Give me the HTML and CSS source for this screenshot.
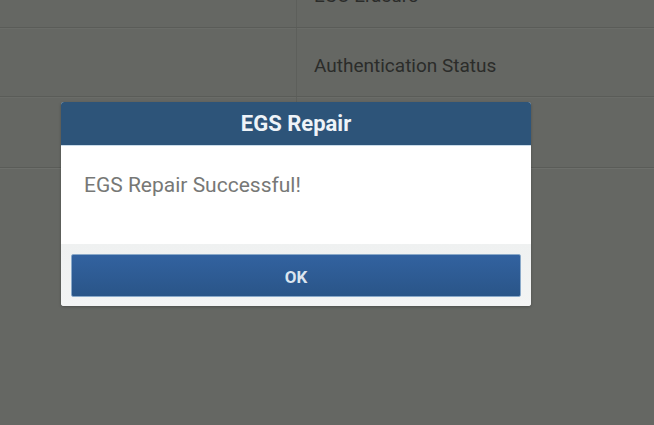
FILE: index.html
```html
<!DOCTYPE html>
<html>
<head>
<meta charset="utf-8">
<link rel="stylesheet" href="styles.css">
</head>
<body>
<div class="screen">
  <div class="table">
    <div class="row first">
      <div class="cell left"></div>
      <div class="cell right">ECU Erasure</div>
    </div>
    <div class="row">
      <div class="cell left"></div>
      <div class="cell right">Authentication Status</div>
    </div>
    <div class="row third">
      <div class="cell left"></div>
      <div class="cell right"></div>
    </div>
  </div>
  <div class="dialog">
    <div class="dialog-title">EGS Repair</div>
    <div class="dialog-body">EGS Repair Successful!</div>
    <div class="dialog-actions">
      <button class="btn-ok">OK</button>
    </div>
  </div>
</div>
</body>
</html>
```
FILE: styles.css
```css
html, body {
  margin: 0;
  padding: 0;
}
body {
  width: 654px;
  height: 425px;
  overflow: hidden;
  background: #656763;
  font-family: Roboto, "Liberation Sans", sans-serif;
}
.screen {
  position: relative;
  width: 654px;
  height: 425px;
  overflow: hidden;
}
.table {
  margin-top: -41px;
  display: flex;
  flex-direction: column;
}
.row {
  display: flex;
  height: 68px;
  border-bottom: 1px solid #5a5c58;
  box-shadow: 0 1px 0 #6a6c68;
}
.row.third {
  height: 70px;
  box-shadow: 0 1px 0 #6d6f6b;
}
.cell {
  display: flex;
  align-items: center;
}
.left {
  width: 296px;
  border-right: 1px solid #5d5f5b;
}
.right {
  flex: 1;
  padding-left: 17px;
  font-size: 19px;
  color: #2b2c2a;
  padding-top: 6px;
  box-sizing: border-box;
}
.row.first .right {
  align-items: flex-end;
  padding-top: 0;
  padding-bottom: 20px;
}
.dialog {
  position: absolute;
  left: 61px;
  top: 102px;
  width: 470px;
  height: 204px;
  border-radius: 3px;
  overflow: hidden;
  display: flex;
  flex-direction: column;
  background: #fbfbfb;
  box-shadow: 0 1px 3px rgba(0,0,0,0.25);
}
.dialog-title {
  height: 44px;
  background: #2d5479;
  color: #eef3f8;
  font-weight: bold;
  font-size: 22px;
  display: flex;
  align-items: center;
  justify-content: center;
  border-bottom: 1px solid #c9dbe9;
}
.dialog-body {
  height: 99px;
  background: #ffffff;
  color: #777876;
  font-size: 21px;
  padding: 27px 0 0 23px;
  box-sizing: border-box;
}
.dialog-actions {
  flex: 1;
  background: linear-gradient(#eff1f1, #f3f4f4);
  padding: 10px 10px 9px 10px;
  display: flex;
}
.btn-ok {
  flex: 1;
  height: 43px;
  border: 1px solid #8aa9c9;
  border-radius: 2px;
  background: linear-gradient(#3262a0, #2a5588);
  color: #dce5ef;
  font-family: Roboto, "Liberation Sans", sans-serif;
  font-weight: bold;
  font-size: 17px;
  padding: 2px 0 0 0;
}
```
